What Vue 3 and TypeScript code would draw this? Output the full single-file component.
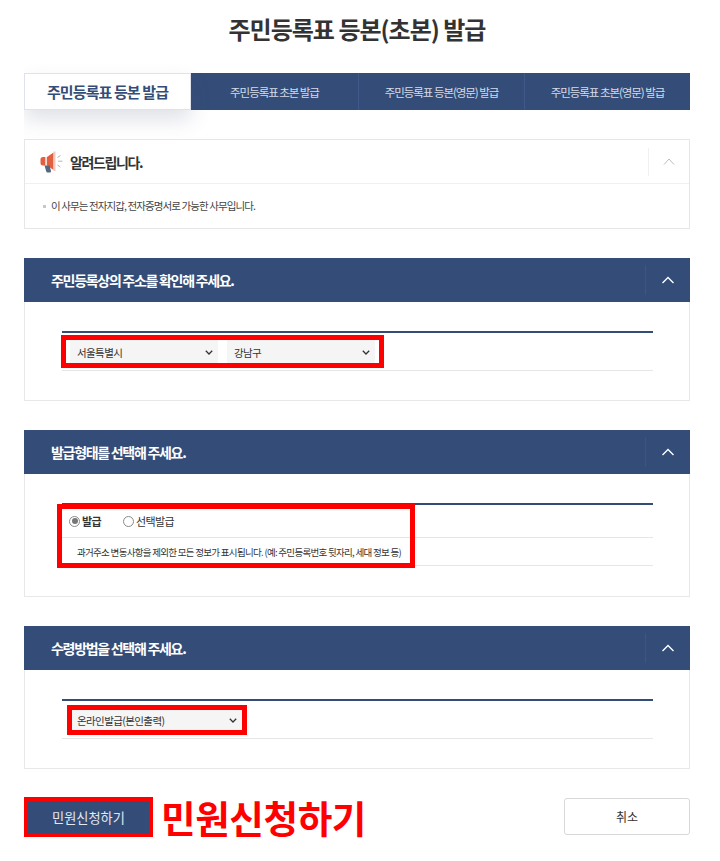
<script setup lang="ts">
const tabs: string[] = ['주민등록표 초본 발급', '주민등록표 등본(영문) 발급', '주민등록표 초본(영문) 발급']
</script>

<template>
  <main class="page">
    <h1 class="title">주민등록표 등본(초본) 발급</h1>

    <nav class="tabs">
      <a class="tab active">주민등록표 등본 발급</a>
      <a v-for="t in tabs" :key="t" class="tab">{{ t }}</a>
    </nav>

    <section class="notice">
      <header class="notice-head">
        <svg class="mega" width="23" height="22" viewBox="0 0 23 22">
          <path d="M0.5 8.5 Q0.5 6 3 6 H5.5 V14.5 H3 Q0.5 14.5 0.5 12 Z" fill="#e2603f" />
          <path d="M5.5 6 H7 V14.5 H5.5 Z" fill="#f4dcd2" />
          <path d="M7 6 L13.5 1.5 V19 L7 14.5 Z" fill="#e2603f" />
          <path d="M13.5 0.5 H15.5 V20 H13.5 Z" fill="#ecc9bc" />
          <path d="M4.5 14.5 H9.5 L11 20 Q11.2 21.5 9.8 21.5 H7.6 Q6.4 21.5 6.1 20 Z" fill="#56677e" />
          <path d="M17.5 6.5 L20.5 4.5 M18 10.2 H22.5 M17.5 14 L20.5 16" stroke="#b5b5b5" stroke-width="1" fill="none" />
        </svg>
        <strong class="notice-title">알려드립니다.</strong>
        <span class="notice-toggle">
          <svg width="12" height="7" viewBox="0 0 12 7"><path d="M1 6.5 L6 1 L11 6.5" fill="none" stroke="#bdbdbd" stroke-width="1" /></svg>
        </span>
      </header>
      <p class="notice-body"><i class="dot"></i>이 사무는 전자지갑, 전자증명서로 가능한 사무입니다.</p>
    </section>

    <section class="card">
      <header class="card-head">
        <h2>주민등록상의 주소를 확인해 주세요.</h2>
        <span class="toggle"><svg width="14" height="8" viewBox="0 0 14 8"><path d="M1.5 7 L7 1.5 L12.5 7" fill="none" stroke="#fff" stroke-width="1.4" /></svg></span>
      </header>
      <div class="card-body">
        <div class="table">
          <div class="row row-select">
            <select class="sel"><option>서울특별시</option></select>
            <select class="sel"><option>강남구</option></select>
            <span class="mark mark-a"></span>
          </div>
        </div>
      </div>
    </section>

    <section class="card card-tall">
      <header class="card-head">
        <h2>발급형태를 선택해 주세요.</h2>
        <span class="toggle"><svg width="14" height="8" viewBox="0 0 14 8"><path d="M1.5 7 L7 1.5 L12.5 7" fill="none" stroke="#fff" stroke-width="1.4" /></svg></span>
      </header>
      <div class="card-body">
        <div class="table">
          <div class="row row-radio">
            <label class="radio selected"><i class="rd on"></i>발급</label>
            <label class="radio"><i class="rd"></i>선택발급</label>
          </div>
          <div class="row row-desc">과거주소 변동사항을 제외한 모든 정보가 표시됩니다. (예: 주민등록번호 뒷자리, 세대 정보 등)</div>
          <span class="mark mark-b"></span>
        </div>
      </div>
    </section>

    <section class="card">
      <header class="card-head">
        <h2>수령방법을 선택해 주세요.</h2>
        <span class="toggle"><svg width="14" height="8" viewBox="0 0 14 8"><path d="M1.5 7 L7 1.5 L12.5 7" fill="none" stroke="#fff" stroke-width="1.4" /></svg></span>
      </header>
      <div class="card-body">
        <div class="table">
          <div class="row row-select">
            <select class="sel sel-way"><option>온라인발급(본인출력)</option></select>
            <span class="mark mark-c"></span>
          </div>
        </div>
      </div>
    </section>

    <footer class="actions">
      <div class="apply-wrap">
        <button class="apply">민원신청하기</button>
        <span class="caption">민원신청하기</span>
      </div>
      <button class="cancel">취소</button>
    </footer>
  </main>
</template>

<style>
html, body { margin: 0; background: #fff; }
</style>

<style scoped>
.page {
  width: 666px;
  height: 861px;
  margin-left: 24px;
  box-sizing: border-box;
  font-family: "Noto Sans CJK KR", "Noto Sans", sans-serif;
  color: #333;
  overflow: hidden;
}
.title {
  margin: 0;
  height: 73px;
  padding-top: 11px;
  box-sizing: border-box;
  text-align: center;
  font-size: 24px;
  line-height: 36px;
  font-weight: 700;
  letter-spacing: -1px;
  color: #333;
}
.tabs { display: grid; grid-template-columns: 167px 167px 166px 166px; height: 37px; background: #344d78; }
.tab {
  display: flex; align-items: center; justify-content: center;
  font-size: 11.5px; letter-spacing: -1.05px; color: #d5dbe6;
  border-left: 1px solid #40598a;
}
.tab:nth-child(2) { border-left: 0; }
.tab.active {
  background: #fff; color: #344d78; font-size: 15px; font-weight: 700;
  letter-spacing: -0.9px; border: 1px solid #dfe2ec;
  box-shadow: 0 10px 20px rgba(60, 75, 110, 0.16);
  box-sizing: border-box;
}
.notice {
  margin-top: 29px; height: 90px; box-sizing: border-box;
  border: 1px solid #e6e6e6;
}
.notice-head {
  height: 43px; display: flex; align-items: center; padding-left: 15px;
  border-bottom: 1px solid #f0f0f0;
}
.mega { flex: none; }
.notice-title { margin-left: 7px; font-size: 14px; font-weight: 700; letter-spacing: -1.4px; color: #333; }
.notice-toggle {
  margin-left: auto; width: 40px; height: 28px; display: flex; align-items: center; justify-content: center;
  border-left: 1px solid #f0f0f0;
}
.notice-body { margin: 0; padding: 13px 0 0 18px; font-size: 10.5px; line-height: 18px; letter-spacing: -0.9px; color: #444; display: flex; align-items: center; }
.dot { width: 3px; height: 3px; background: #c8c8c8; margin-right: 5px; }
.card { margin-top: 29px; }
.card-head {
  height: 44px; background: #344d78; display: flex; align-items: center;
  padding-left: 27px; color: #fff;
}
.card-head h2 { margin: 0; font-size: 14px; font-weight: 700; letter-spacing: -1.3px; line-height: 20px; }
.toggle {
  margin-left: auto; width: 44px; height: 30px; display: flex; align-items: center; justify-content: center;
  border-left: 1px solid #3d5681;
}
.card-body {
  border: 1px solid #e8e8e8; border-top: 0; padding: 29px 36px 29px 37px; box-sizing: border-box; height: 99px;
}
.card-tall .card-body { height: 123px; }
.table { position: relative; border-top: 2px solid #344d78; }
.row { position: relative; border-bottom: 1px solid #e6e6e6; box-sizing: border-box; }
.row-select { height: 38px; display: flex; align-items: flex-start; padding: 7px 0 0 8px; gap: 9px; }
.sel {
  appearance: none;
  height: 24px; width: 148px; border: 0; border-radius: 0; font-family: inherit;
  background: #f5f5f5 url("data:image/svg+xml,%3Csvg xmlns='http://www.w3.org/2000/svg' width='8' height='5' viewBox='0 0 8 5'%3E%3Cpath d='M0.8 0.8 L4 4 L7.2 0.8' fill='none' stroke='%23333' stroke-width='1.3'/%3E%3C/svg%3E") no-repeat right 5px center;
  font-size: 10.5px; color: #333; padding-left: 7px; letter-spacing: -0.6px; box-sizing: border-box;
}
.sel-way { width: 172px; }
.row-radio { height: 33px; display: flex; align-items: center; padding-left: 7px; gap: 22px; }
.radio { display: flex; align-items: center; font-size: 11px; letter-spacing: -0.6px; color: #333; }
.radio.selected { font-weight: 700; }
.rd {
  width: 9px; height: 9px; border: 1px solid #8a8a8a; border-radius: 50%; margin-right: 2px;
  position: relative; background: #fff;
}
.rd.on::after {
  content: ""; position: absolute; left: 1.5px; top: 1.5px; width: 6px; height: 6px;
  border-radius: 50%; background: #777;
}
.row-desc { height: 28px; display: flex; align-items: center; padding-left: 15px; font-size: 9.5px; letter-spacing: -0.7px; color: #333; }
.mark { position: absolute; border: 5px solid #f00; box-sizing: border-box; pointer-events: none; }
.mark-a { left: -1px; top: 2px; width: 323px; height: 33px; }
.mark-b { left: -5px; top: -1px; width: 358px; height: 64px; }
.mark-c { left: 5px; top: 4px; width: 180px; height: 30px; }
.actions { margin-top: 28px; display: flex; justify-content: space-between; align-items: flex-start; }
.apply-wrap { display: flex; align-items: center; gap: 8px; }
.apply {
  width: 129px; height: 40px; box-sizing: border-box; border: 4px solid #f00; background: #344d78;
  color: #e4e8ef; font-family: inherit; font-size: 13.2px; letter-spacing: 0; padding: 0;
}
.caption { font-size: 37.6px; font-weight: 700; color: #f00; line-height: 40px; letter-spacing: -0.4px; margin-top: -1px; }
.cancel {
  width: 126px; height: 37px; margin-top: 1px; background: #fff; border: 1px solid #d8d8d8; border-radius: 3px;
  font-family: inherit; font-size: 12px; color: #333; box-sizing: border-box;
}
</style>
